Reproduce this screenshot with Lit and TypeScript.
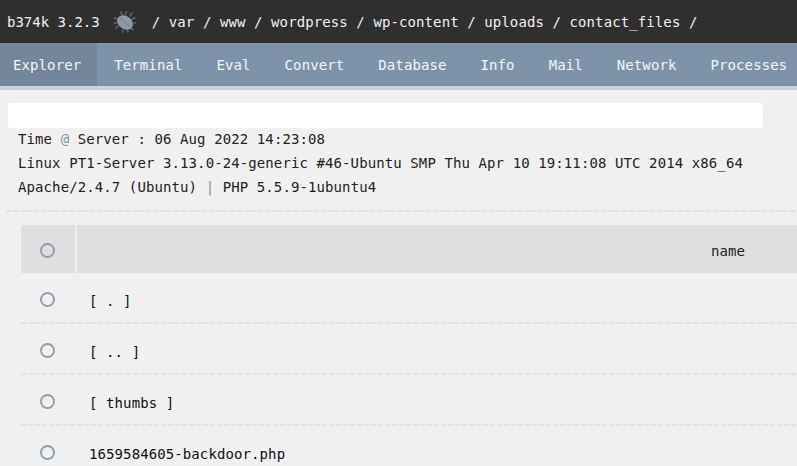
import { LitElement, html, css, svg } from 'lit';
import { customElement } from 'lit/decorators.js';

const PATH = ['var', 'www', 'wordpress', 'wp-content', 'uploads', 'contact_files'];
const MENU = ['Explorer', 'Terminal', 'Eval', 'Convert', 'Database', 'Info', 'Mail', 'Network', 'Processes'];
const ROWS = ['[ . ]', '[ .. ]', '[ thumbs ]', '1659584605-backdoor.php'];

const bug = svg`<svg class="bug" width="26" height="26" viewBox="0 0 26 26">
  <g stroke="#7f8c98" stroke-width="1.6" stroke-linecap="round" opacity="0.6">
    <path d="M6 10 2.500 9M5 14H2M6 17l-2 2M10 6 9 3M14 5.500V2.500M18 7l2-3M20 10l3-1M21 14h2.500M19 19l2 2M15 21l1 2M11 21l-.5 2"/>
  </g>
  <ellipse cx="13" cy="13.500" rx="8.500" ry="6.500" transform="rotate(35 13 13.500)" fill="#8d9aa6"/>
  <path d="M8 9l10 9" stroke="#6f7c88" stroke-width="1.200" opacity="0.5"/>
</svg>`;

@customElement('app-root')
export class AppRoot extends LitElement {
  static styles = css`
    :host {
      display: block;
      width: 797px;
      height: 466px;
      overflow: hidden;
      background: #f0f0f0;
      color: #222;
      font-family: 'DejaVu Sans Mono', monospace;
      font-size: 14px;
      letter-spacing: 0.1px;
    }

    header {
      display: flex;
      align-items: center;
      height: 43px;
      padding-left: 7px;
      background: #2f2f2f;
      color: #efefef;
      white-space: pre;
    }

    header > span {
      letter-spacing: 0;
    }

    .bug {
      margin: 0 14px 0 12px;
      filter: blur(0.5px);
    }

    .crumbs {
      display: flex;
      gap: 8.530px;
    }

    nav {
      display: flex;
      height: 43px;
      background: #7f93a8;
      border-bottom: 4px solid #cfd2d5;
      color: #f4f4f4;
      white-space: nowrap;
    }

    nav a {
      padding: 0 17px;
      line-height: 45px;
    }

    nav a.active {
      margin-left: -4px;
      padding-right: 16px;
      background: #74879a;
    }

    main {
      padding: 13px 0 0 8px;
    }

    .box {
      width: 755px;
      height: 25px;
      background: #fff;
      border-radius: 2px;
    }

    .info {
      margin-top: -1px;
      padding: 0 0 11px 10px;
      line-height: 24px;
      white-space: pre;
    }

    .info span {
      color: #7f93a8;
    }

    .rule {
      height: 2px;
      margin-left: -2px;
      background: repeating-linear-gradient(90deg, #e2e2e2 0 5px, transparent 5px 7px);
    }

    table {
      width: 790px;
      margin: 13px 0 0 13px;
      border-collapse: separate;
      border-spacing: 0;
      table-layout: fixed;
    }

    th {
      height: 45px;
      padding: 3px 0 0;
      background: #dfdfdf;
      font-weight: 400;
    }

    th.check {
      width: 54px;
      border-right: 2px solid #f0f0f0;
    }

    th.name {
      padding-left: 634px;
      text-align: left;
    }

    td {
      height: 45px;
      padding: 6px 0 0;
      background: repeating-linear-gradient(90deg, #e2e2e2 0 5px, transparent 5px 7px) bottom / 100% 2px no-repeat;
      color: #111;
    }

    td.file {
      padding: 4px 0 0 12px;
    }

    .radio {
      display: block;
      box-sizing: border-box;
      width: 15px;
      height: 15px;
      margin: 0 0 5px 19px;
      border: 2px solid #8fa1b3;
      border-radius: 50%;
    }

    th .radio {
      margin-bottom: 0;
    }
  `;

  render() {
    return html`
      <header>
        <span>b374k 3.2.3</span>
        ${bug}
        <div class="crumbs">
          <span>/</span>
          ${PATH.map((p) => html`<span>${p}</span><span>/</span>`)}
        </div>
      </header>
      <nav>
        ${MENU.map((m, i) => html`<a class=${i === 0 ? 'active' : ''}>${m}</a>`)}
      </nav>
      <main>
        <div class="box"></div>
        <div class="info">Time <span>@</span> Server : 06 Aug 2022 14:23:08
Linux PT1-Server 3.13.0-24-generic #46-Ubuntu SMP Thu Apr 10 19:11:08 UTC 2014 x86_64
Apache/2.4.7 (Ubuntu) <span>|</span> PHP 5.5.9-1ubuntu4</div>
        <div class="rule"></div>
        <table>
          <thead>
            <tr>
              <th class="check"><i class="radio"></i></th>
              <th class="name">name</th>
            </tr>
          </thead>
          <tbody>
            ${ROWS.map((r) => html`
              <tr>
                <td class="check"><i class="radio"></i></td>
                <td class="file">${r}</td>
              </tr>
            `)}
          </tbody>
        </table>
      </main>
    `;
  }
}
